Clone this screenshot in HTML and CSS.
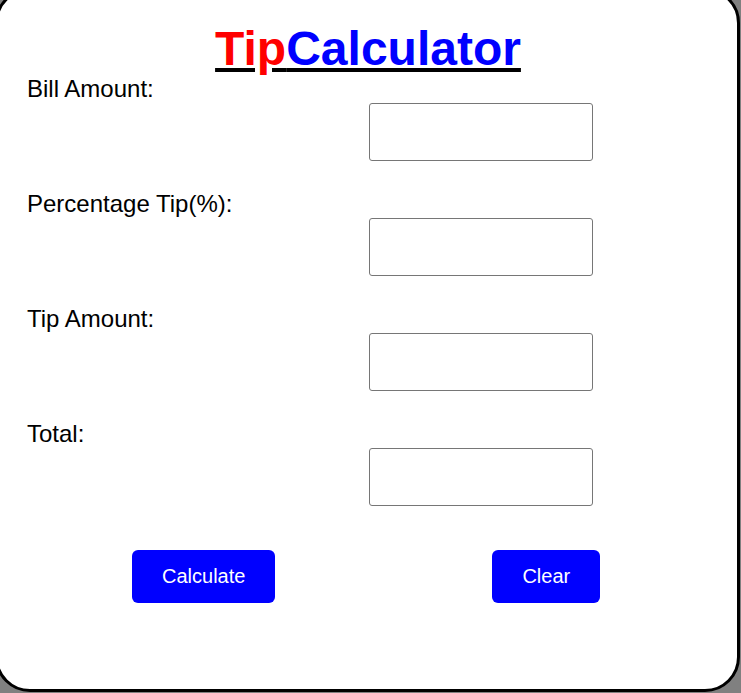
FILE: index.html
```html
<!DOCTYPE html>
<html lang="en">
<head>
<meta charset="utf-8">
<title>Tip Calculator</title>
<link rel="stylesheet" href="styles.css">
</head>
<body>
<div class="card">
  <h1 class="title"><span class="tip">Tip</span><span class="calc">Calculator</span></h1>
  <div class="field">
    <label class="label" for="bill">Bill Amount:</label>
    <input class="input" id="bill" type="text">
  </div>
  <div class="field">
    <label class="label" for="pct">Percentage Tip(%):</label>
    <input class="input" id="pct" type="text">
  </div>
  <div class="field">
    <label class="label" for="tipamt">Tip Amount:</label>
    <input class="input" id="tipamt" type="text">
  </div>
  <div class="field">
    <label class="label" for="total">Total:</label>
    <input class="input" id="total" type="text">
  </div>
  <div class="actions">
    <button class="btn" type="button">Calculate</button>
    <button class="btn" type="button">Clear</button>
  </div>
</div>
</body>
</html>
```
FILE: styles.css
```css
html, body {
  margin: 0;
  padding: 0;
  overflow: hidden;
  background: #808080;
  font-family: "Liberation Sans", Arial, sans-serif;
}

.card {
  box-sizing: border-box;
  width: 745px;
  height: 704px;
  margin: -12px 0 0 -5px;
  padding: 30px 28px 0 29px;
  background: #ffffff;
  border: 3px solid #000000;
  border-radius: 35px;
}

.title {
  margin: 0;
  font-size: 48px;
  line-height: 55px;
  font-weight: bold;
  text-align: center;
  color: #000000;
  text-decoration: underline;
}

.tip {
  color: #ff0000;
}

.calc {
  color: #0000ff;
}

.field {
  display: flex;
  flex-direction: column;
  align-items: flex-start;
  margin-bottom: 30px;
}

.label {
  font-size: 24px;
  line-height: 25px;
  color: #000000;
}

.input {
  box-sizing: border-box;
  width: 224px;
  height: 58px;
  margin: 2px 0 0 342px;
  border: 1px solid #767676;
  border-radius: 3px;
  background: #ffffff;
}

.actions {
  display: flex;
  gap: 217px;
  margin-top: 44px;
  padding-left: 105px;
}

.btn {
  padding: 15px 30px;
  border: none;
  border-radius: 6px;
  background: #0000ff;
  color: #ffffff;
  font-family: "Liberation Sans", Arial, sans-serif;
  font-size: 20px;
  line-height: 23px;
}
```
